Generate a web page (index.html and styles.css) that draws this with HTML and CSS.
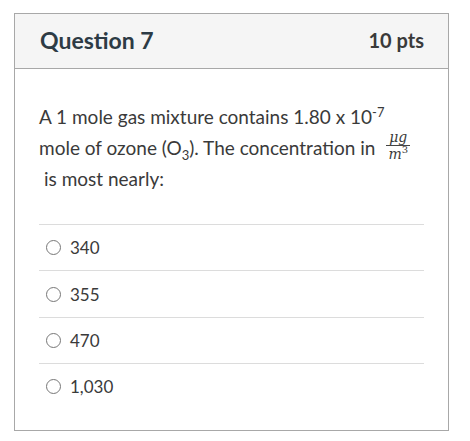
FILE: index.html
```html
<!DOCTYPE html>
<html>
<head>
<meta charset="utf-8">
<link rel="stylesheet" href="styles.css">
</head>
<body>
<div class="card">
  <div class="header">
    <span class="title">Question 7</span>
    <span class="pts">10 pts</span>
  </div>
  <div class="content">
    <div class="question">
      <div class="line">A 1 mole gas mixture contains 1.80 x 10<sup>-7</sup></div>
      <div class="line">mole of ozone (O<sub>3</sub>). The concentration in <span class="frac"><span class="num">μg</span><span class="den">m<sup>3</sup></span></span></div>
      <div class="line indent">is most nearly:</div>
    </div>
    <div class="answers">
      <div class="answer"><span class="radio"></span><span>340</span></div>
      <div class="answer"><span class="radio"></span><span>355</span></div>
      <div class="answer"><span class="radio"></span><span>470</span></div>
      <div class="answer"><span class="radio"></span><span>1,030</span></div>
    </div>
  </div>
</div>
</body>
</html>
```
FILE: styles.css
```css
html, body {
  margin: 0;
  padding: 0;
  background: #fff;
}
body {
  padding: 13px 0 0 14px;
  font-family: Lato, "Liberation Sans", sans-serif;
  color: #2d3b45;
}
.card {
  width: 433px;
  height: 416px;
  border: 1px solid #a8a8a8;
  box-sizing: content-box;
}
.header {
  height: 54px;
  box-sizing: border-box;
  background: #f5f5f5;
  border-bottom: 1px solid #a8a8a8;
  display: flex;
  align-items: center;
  justify-content: space-between;
  padding: 0 24px 3px 25px;
  height: 55px;
}
.title {
  font-weight: 700;
  font-size: 23px;
  color: #2d3b45;
}
.pts {
  font-weight: 700;
  font-size: 20px;
  color: #3a3a3a;
}
.content {
  padding: 32px 24px 0 24px;
}
.question {
  font-size: 19px;
  color: #3a3a3a;
}
.line {
  height: 31px;
  line-height: 31px;
  white-space: nowrap;
}
.line.indent {
  padding-left: 5px;
}
sup, sub {
  font-size: 13px;
  line-height: 0;
}
.frac {
  display: inline-flex;
  flex-direction: column;
  align-items: center;
  vertical-align: middle;
  font-family: "DejaVu Serif", "Liberation Serif", serif;
  font-style: italic;
  font-size: 14px;
  line-height: 11px;
  margin-left: 6px;
  position: relative;
  top: -4px;
}
.frac .num {
  border-bottom: 1px solid #444;
  padding: 0 3px 2px;
}
.frac .den {
  padding-top: 3px;
}
.frac sup {
  font-size: 10px;
  font-style: normal;
}
.answers {
  margin-top: 30px;
}
.answer {
  height: 45px;
  border-top: 1px solid #dcdcdc;
  display: flex;
  align-items: center;
  font-size: 17px;
  color: #3a3a3a;
}
.answer:nth-child(2) {
  height: 46px;
}
.radio {
  width: 13px;
  height: 13px;
  border: 1px solid #777;
  border-radius: 50%;
  margin: 0 9px 0 7px;
}
```
